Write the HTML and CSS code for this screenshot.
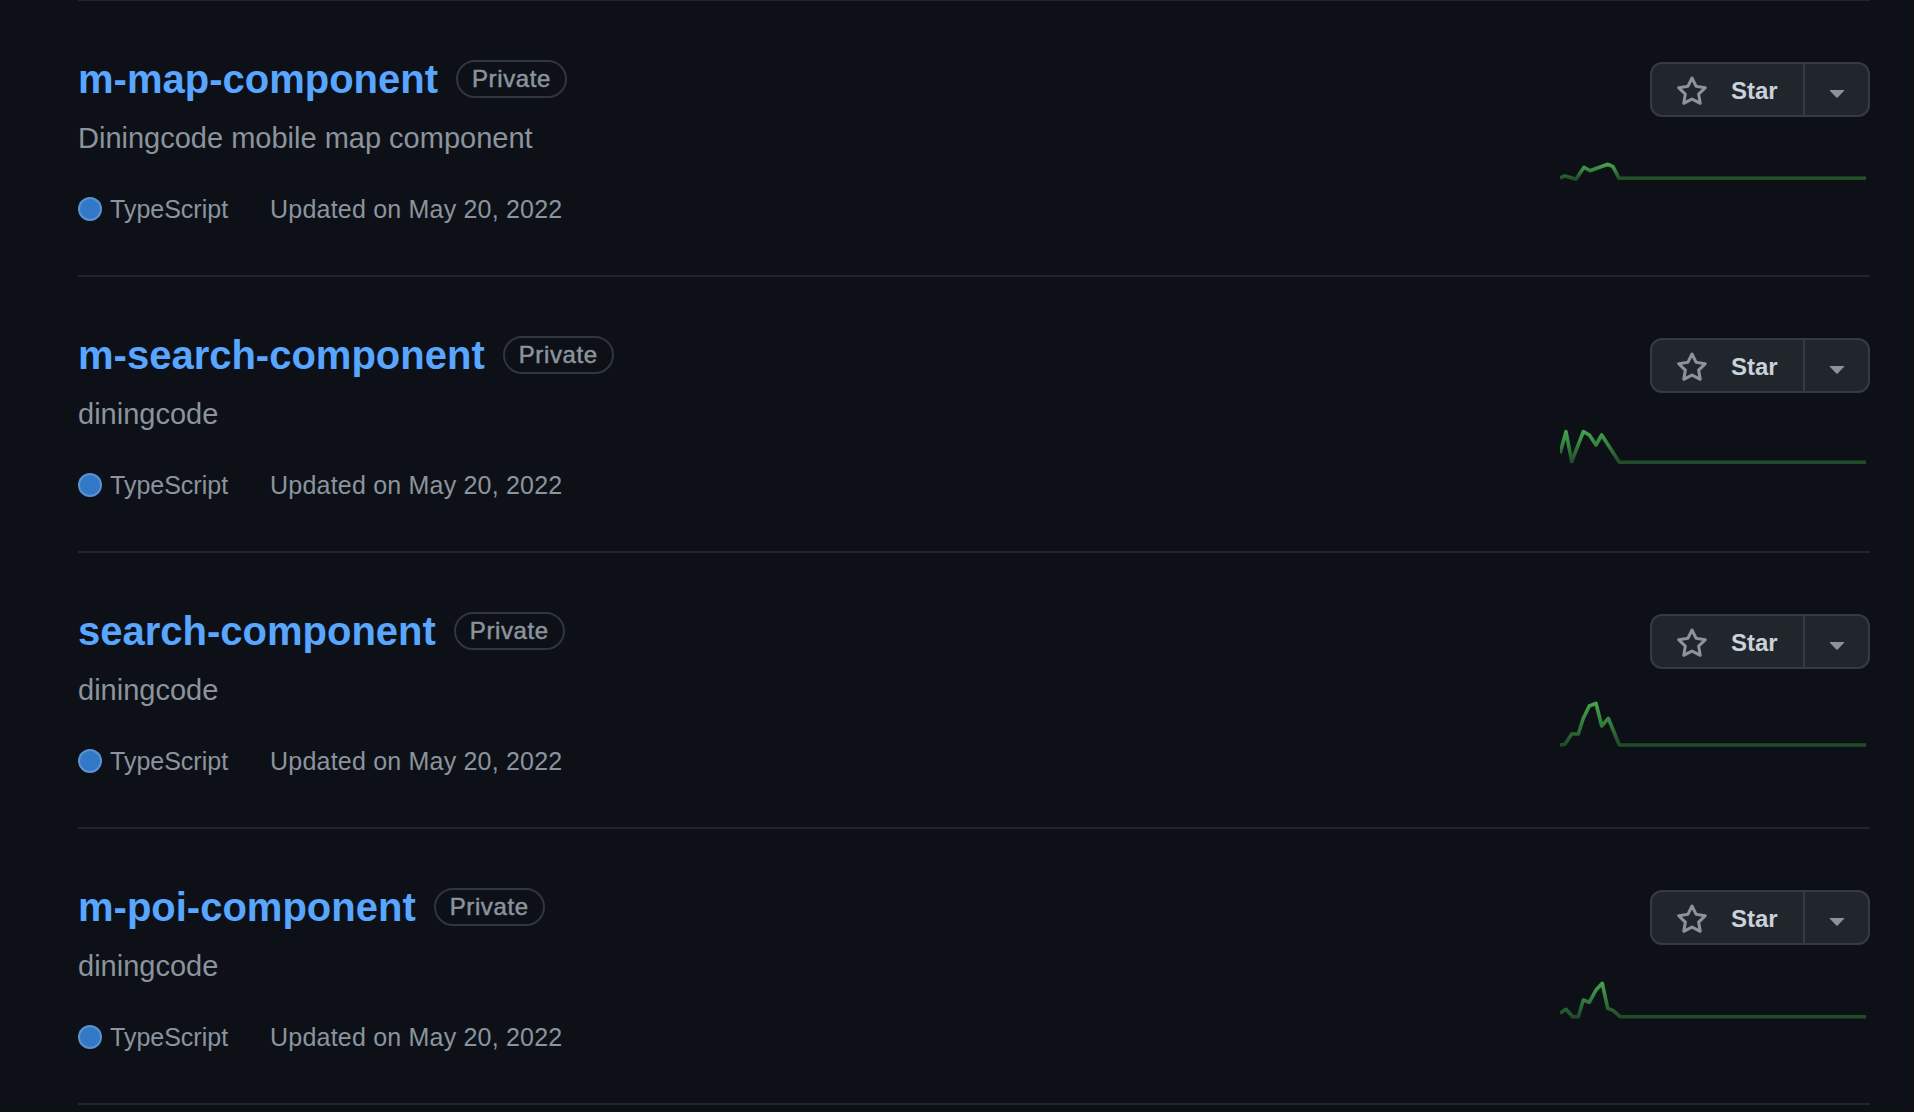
FILE: index.html
```html
<!DOCTYPE html>
<html lang="en">
<head>
<meta charset="utf-8">
<title>Repositories</title>
<link rel="stylesheet" href="styles.css">
</head>
<body>
<div class="page">
  <ul class="repo-list">
    <li class="repo">
      <div class="repo-main">
        <div class="repo-head">
          <a class="repo-name" href="#">m-map-component</a>
          <span class="badge">Private</span>
        </div>
        <p class="repo-desc">Diningcode mobile map component</p>
        <div class="repo-meta">
          <span class="lang"><span class="lang-dot"></span>TypeScript</span>
          <span class="updated">Updated on May 20, 2022</span>
        </div>
      </div>
      <div class="repo-side">
        <div class="star-group">
          <button class="star-btn"><svg viewBox="0 0 16 16" class="star-icon"><path d="M8 .25a.75.75 0 01.673.418l1.882 3.815 4.21.612a.75.75 0 01.416 1.279l-3.046 2.97.719 4.192a.75.75 0 01-1.088.791L8 12.347l-3.766 1.98a.75.75 0 01-1.088-.79l.72-4.194L.818 6.374a.75.75 0 01.416-1.28l4.21-.611L7.327.668A.75.75 0 018 .25zm0 2.445L6.615 5.5a.75.75 0 01-.564.41l-3.097.45 2.24 2.184a.75.75 0 01.216.664l-.528 3.084 2.769-1.456a.75.75 0 01.698 0l2.77 1.456-.53-3.084a.75.75 0 01.216-.664l2.24-2.183-3.096-.45a.75.75 0 01-.564-.41L8 2.694v.001z"/></svg><span>Star</span></button>
          <button class="star-menu"><svg viewBox="0 0 16 16" class="caret"><path d="M4.427 7.427l3.396 3.396a.25.25 0 00.354 0l3.396-3.396A.25.25 0 0011.396 7H4.604a.25.25 0 00-.177.427z"/></svg></button>
        </div>
        <svg class="spark" viewBox="1560 130 310 70">
          <defs><linearGradient id="g1" x1="0" y1="1" x2="0" y2="0"><stop offset="0" stop-color="#224b2a"/><stop offset="0.15" stop-color="#26572e"/><stop offset="0.55" stop-color="#32823c"/><stop offset="1" stop-color="#44a14c"/></linearGradient></defs>
          <polyline points="1560,178 1565,176 1576,179.3 1584,167.3 1590,170.7 1608,164.3 1613,166.7 1619,178.3 1866,178.3" stroke="url(#g1)"/>
        </svg>
      </div>
    </li>
    <li class="repo">
      <div class="repo-main">
        <div class="repo-head">
          <a class="repo-name" href="#">m-search-component</a>
          <span class="badge">Private</span>
        </div>
        <p class="repo-desc">diningcode</p>
        <div class="repo-meta">
          <span class="lang"><span class="lang-dot"></span>TypeScript</span>
          <span class="updated">Updated on May 20, 2022</span>
        </div>
      </div>
      <div class="repo-side">
        <div class="star-group">
          <button class="star-btn"><svg viewBox="0 0 16 16" class="star-icon"><path d="M8 .25a.75.75 0 01.673.418l1.882 3.815 4.21.612a.75.75 0 01.416 1.279l-3.046 2.97.719 4.192a.75.75 0 01-1.088.791L8 12.347l-3.766 1.98a.75.75 0 01-1.088-.79l.72-4.194L.818 6.374a.75.75 0 01.416-1.28l4.21-.611L7.327.668A.75.75 0 018 .25zm0 2.445L6.615 5.5a.75.75 0 01-.564.41l-3.097.45 2.24 2.184a.75.75 0 01.216.664l-.528 3.084 2.769-1.456a.75.75 0 01.698 0l2.77 1.456-.53-3.084a.75.75 0 01.216-.664l2.24-2.183-3.096-.45a.75.75 0 01-.564-.41L8 2.694v.001z"/></svg><span>Star</span></button>
          <button class="star-menu"><svg viewBox="0 0 16 16" class="caret"><path d="M4.427 7.427l3.396 3.396a.25.25 0 00.354 0l3.396-3.396A.25.25 0 0011.396 7H4.604a.25.25 0 00-.177.427z"/></svg></button>
        </div>
        <svg class="spark" viewBox="1560 130 310 70">
          <defs><linearGradient id="g2" x1="0" y1="1" x2="0" y2="0"><stop offset="0" stop-color="#224b2a"/><stop offset="0.15" stop-color="#26572e"/><stop offset="0.55" stop-color="#32823c"/><stop offset="1" stop-color="#44a14c"/></linearGradient></defs>
          <polyline points="1560,177.3 1566,155.7 1571.7,185.7 1583.3,155.7 1589.3,159 1596,169 1601.7,159 1619.3,186.3 1866,186.3" stroke="url(#g2)"/>
        </svg>
      </div>
    </li>
    <li class="repo">
      <div class="repo-main">
        <div class="repo-head">
          <a class="repo-name" href="#">search-component</a>
          <span class="badge">Private</span>
        </div>
        <p class="repo-desc">diningcode</p>
        <div class="repo-meta">
          <span class="lang"><span class="lang-dot"></span>TypeScript</span>
          <span class="updated">Updated on May 20, 2022</span>
        </div>
      </div>
      <div class="repo-side">
        <div class="star-group">
          <button class="star-btn"><svg viewBox="0 0 16 16" class="star-icon"><path d="M8 .25a.75.75 0 01.673.418l1.882 3.815 4.21.612a.75.75 0 01.416 1.279l-3.046 2.97.719 4.192a.75.75 0 01-1.088.791L8 12.347l-3.766 1.98a.75.75 0 01-1.088-.79l.72-4.194L.818 6.374a.75.75 0 01.416-1.28l4.21-.611L7.327.668A.75.75 0 018 .25zm0 2.445L6.615 5.5a.75.75 0 01-.564.41l-3.097.45 2.24 2.184a.75.75 0 01.216.664l-.528 3.084 2.769-1.456a.75.75 0 01.698 0l2.77 1.456-.53-3.084a.75.75 0 01.216-.664l2.24-2.183-3.096-.45a.75.75 0 01-.564-.41L8 2.694v.001z"/></svg><span>Star</span></button>
          <button class="star-menu"><svg viewBox="0 0 16 16" class="caret"><path d="M4.427 7.427l3.396 3.396a.25.25 0 00.354 0l3.396-3.396A.25.25 0 0011.396 7H4.604a.25.25 0 00-.177.427z"/></svg></button>
        </div>
        <svg class="spark" viewBox="1560 130 310 70">
          <defs><linearGradient id="g3" x1="0" y1="1" x2="0" y2="0"><stop offset="0" stop-color="#224b2a"/><stop offset="0.15" stop-color="#26572e"/><stop offset="0.55" stop-color="#32823c"/><stop offset="1" stop-color="#44a14c"/></linearGradient></defs>
          <polyline points="1560,193 1565,192.3 1571.7,182 1578.3,182 1583.3,166.3 1589.3,154 1596,151.3 1601.7,174 1608.3,166.3 1619.3,193 1866,193" stroke="url(#g3)"/>
        </svg>
      </div>
    </li>
    <li class="repo">
      <div class="repo-main">
        <div class="repo-head">
          <a class="repo-name" href="#">m-poi-component</a>
          <span class="badge">Private</span>
        </div>
        <p class="repo-desc">diningcode</p>
        <div class="repo-meta">
          <span class="lang"><span class="lang-dot"></span>TypeScript</span>
          <span class="updated">Updated on May 20, 2022</span>
        </div>
      </div>
      <div class="repo-side">
        <div class="star-group">
          <button class="star-btn"><svg viewBox="0 0 16 16" class="star-icon"><path d="M8 .25a.75.75 0 01.673.418l1.882 3.815 4.21.612a.75.75 0 01.416 1.279l-3.046 2.97.719 4.192a.75.75 0 01-1.088.791L8 12.347l-3.766 1.98a.75.75 0 01-1.088-.79l.72-4.194L.818 6.374a.75.75 0 01.416-1.28l4.21-.611L7.327.668A.75.75 0 018 .25zm0 2.445L6.615 5.5a.75.75 0 01-.564.41l-3.097.45 2.24 2.184a.75.75 0 01.216.664l-.528 3.084 2.769-1.456a.75.75 0 01.698 0l2.77 1.456-.53-3.084a.75.75 0 01.216-.664l2.24-2.183-3.096-.45a.75.75 0 01-.564-.41L8 2.694v.001z"/></svg><span>Star</span></button>
          <button class="star-menu"><svg viewBox="0 0 16 16" class="caret"><path d="M4.427 7.427l3.396 3.396a.25.25 0 00.354 0l3.396-3.396A.25.25 0 0011.396 7H4.604a.25.25 0 00-.177.427z"/></svg></button>
        </div>
        <svg class="spark" viewBox="1560 130 310 70">
          <defs><linearGradient id="g4" x1="0" y1="1" x2="0" y2="0"><stop offset="0" stop-color="#224b2a"/><stop offset="0.15" stop-color="#26572e"/><stop offset="0.55" stop-color="#32823c"/><stop offset="1" stop-color="#44a14c"/></linearGradient></defs>
          <polyline points="1560,185.3 1566,181.3 1572.7,188.7 1578.3,188.7 1583.3,172 1589.3,174.3 1596,162 1602.3,155.3 1607.7,180.3 1613.3,182.7 1620,188.7 1866,188.7" stroke="url(#g4)"/>
        </svg>
      </div>
    </li>
  </ul>
</div>
</body>
</html>
```
FILE: styles.css
```css
html, body {
  margin: 0;
  padding: 0;
  background: #0d1117;
}

body {
  font-family: "Liberation Sans", Arial, sans-serif;
  color: #8b949e;
  overflow: hidden;
}

.page {
  padding: 0 44px 0 78px;
}

.repo-list {
  list-style: none;
  margin: -1px 0 0;
  padding: 0;
  border-bottom: 2px solid #21262d;
}

.repo {
  display: flex;
  justify-content: space-between;
  border-top: 2px solid #21262d;
  padding: 53px 0 48px;
}

.repo-head {
  display: flex;
  align-items: center;
  height: 50px;
}

.repo-name {
  font-size: 40px;
  font-weight: 700;
  line-height: 50px;
  color: #58a6ff;
  text-decoration: none;
}

.badge {
  margin-left: 18px;
  border: 2px solid #30363d;
  border-radius: 999px;
  padding: 0 14px;
  font-size: 24px;
  font-weight: 400;
  letter-spacing: 0.6px;
  -webkit-text-stroke: 0.5px #8b949e;
  line-height: 34px;
  color: #8b949e;
}

.repo-desc {
  margin: 14px 0 0;
  font-size: 29px;
  line-height: 40px;
  color: #8b949e;
}

.repo-meta {
  margin-top: 33px;
  display: flex;
  align-items: center;
  font-size: 25px;
  line-height: 36px;
  color: #8b949e;
}

.lang {
  display: flex;
  align-items: center;
  margin-right: 42px;
}

.updated {
  letter-spacing: 0.2px;
}

.lang-dot {
  width: 24px;
  height: 24px;
  box-sizing: border-box;
  border-radius: 50%;
  background: #3178c6;
  border: 2px solid rgba(255, 255, 255, 0.2);
  margin-right: 8px;
}

.repo-side {
  display: flex;
  flex-direction: column;
  align-items: flex-end;
  padding-top: 8px;
}

.star-group {
  display: flex;
  height: 55px;
  box-sizing: border-box;
  border: 2px solid #363b42;
  border-radius: 12px;
  background: #21262d;
  overflow: hidden;
}

.star-btn {
  width: 151px;
  display: flex;
  align-items: center;
  padding: 0 0 0 24px;
  margin: 0;
  background: none;
  border: 0;
  color: #c9d1d9;
  font-family: "Liberation Sans", Arial, sans-serif;
  font-size: 24px;
  font-weight: 700;
}

.star-btn span {
  margin-top: 2px;
}

.star-icon {
  width: 32px;
  height: 32px;
  margin: 4px 23px 0 0;
  fill: #8b949e;
  flex: none;
}

.star-menu {
  width: 65px;
  margin: 0;
  padding: 0;
  border: 0;
  border-left: 2px solid #363b42;
  background: none;
  display: flex;
  align-items: center;
  justify-content: center;
}

.caret {
  width: 32px;
  height: 32px;
  margin-top: 4px;
  fill: #8b949e;
}

.spark {
  display: block;
  margin-top: 13px;
  width: 310px;
  height: 70px;
}

.spark polyline {
  fill: none;
  stroke-width: 3.6;
  stroke-linejoin: round;
  stroke-linecap: butt;
}
```
